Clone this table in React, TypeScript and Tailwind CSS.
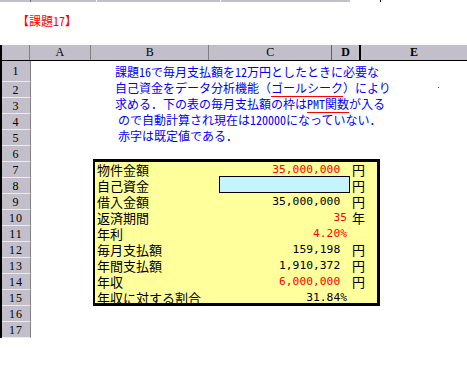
import React from "react";

// shared grey of the row/column headers
const HEAD_BG = "bg-[#c2bfca]";

interface Item {
  label: string;
  value?: string;
  unit?: string;
  red?: boolean;
  input?: boolean;
}

const items: Item[] = [
  { label: "物件金額", value: "35,000,000 ", unit: "円", red: true },
  { label: "自己資金", input: true, unit: "円" },
  { label: "借入金額", value: "35,000,000 ", unit: "円" },
  { label: "返済期間", value: "35", unit: "年", red: true },
  { label: "年利", value: "4.20%", red: true },
  { label: "毎月支払額", value: "159,198 ", unit: "円" },
  { label: "年間支払額", value: "1,910,372 ", unit: "円" },
  { label: "年収", value: "6,000,000 ", unit: "円", red: true },
  { label: "年収に対する割合", value: "31.84%" },
];

// ascii runs drawn at half width, like the sheet's gothic font
function H({ children }: { children: React.ReactNode }) {
  return <span className="[font-feature-settings:'hwid']">{children}</span>;
}

export default function App() {
  const rows = Array.from({ length: 17 }, (_, i) => i + 1);

  return (
    <div className="relative w-[467px] h-[376px] overflow-hidden bg-white font-['Noto_Sans_CJK_JP',sans-serif]">
      {/* leftover strip of the sheet above */}
      <div className="flex h-[2px]">
        <div className={`w-[31px] ${HEAD_BG} border-r border-[#707070]`} />
        <div className={`w-[65px] ${HEAD_BG}`} />
        <div className={`w-[124px] ${HEAD_BG} border-l border-white`} />
        <div className={`w-[130px] ${HEAD_BG} border-l border-white`} />
        <div className="w-[30px]" />
        <div className="w-px bg-black" />
      </div>

      {/* title */}
      <div className="h-[43px] pl-[17px] pt-[12px] text-[12px] leading-[14px] text-[#ff0000]">
        【課題<H>17</H>】
      </div>

      {/* column headers */}
      <div className="flex h-[16px] border-b border-black font-['Liberation_Serif',serif] text-[12px] leading-[15px] text-black">
        <div className={`w-[31px] ${HEAD_BG} border-l-2 border-black border-r border-r-[#808080]`} />
        <div className={`w-[65px] ${HEAD_BG} border-r border-[#808080] text-center`}>A</div>
        <div className={`w-[124px] ${HEAD_BG} border-r border-[#808080] text-center`}>B</div>
        <div className={`w-[130px] ${HEAD_BG} border-r border-[#606060] text-center`}>C</div>
        <div className={`w-[30px] ${HEAD_BG} border-r-2 border-black text-center font-bold`}>D</div>
        <div className={`w-[106px] shrink-0 ${HEAD_BG} text-center font-bold`}>E</div>
      </div>

      <div className="flex">
        {/* row headers */}
        <div className="w-[31px] shrink-0 border-l-2 border-black">
          {rows.map((n) => (
            <div
              key={n}
              className={`${n === 1 ? "h-[21px]" : "h-[16px]"} ${HEAD_BG} border-b border-[#ecebf4] border-r border-r-[#808080] flex items-center justify-center font-['Liberation_Serif',serif] text-[12px] tracking-[1px] text-black`}
            >
              {n}
            </div>
          ))}
        </div>

        {/* cells */}
        <div className="relative flex-1">
          <div className="pt-[3px] pl-[84px] text-[12px] leading-[16px] text-[#0000ff] whitespace-nowrap">
            <div>
              課題<H>16</H>で毎月支払額を<H>12</H>万円としたときに必要な
            </div>
            <div>
              自己資金をデータ分析機能（
              <span className="underline decoration-[#ff0000] underline-offset-[3px]">ゴールシーク</span>
              ）により
            </div>
            <div>
              求める．下の表の毎月支払額の枠は
              <span className="underline decoration-[#ff0000] underline-offset-[3px]">
                <H>PMT</H>関数
              </span>
              が入る
            </div>
            <div className="pl-[3px]">
              ので自動計算され現在は<H>120000</H>になっていない．
            </div>
            <div className="pl-[3px]">赤字は既定値である．</div>
          </div>

          <span className="absolute left-[407px] top-[26px] h-px w-px bg-[#ff0000]" />

          {/* loan table */}
          <div className="ml-[62px] mt-[15px] w-[287px] border-l-2 border-t-[3px] border-r-[3px] border-b-[3px] border-black bg-[#ffff9c]">
            {items.map((it, i) => (
              <div
                key={it.label}
                className={`flex ${i === items.length - 1 ? "h-[13px]" : "h-[16px]"} text-[13px] leading-[16px] text-black`}
              >
                <div className="w-[125px] pl-[2px] whitespace-nowrap">{it.label}</div>
                <div className="w-[130px]">
                  {it.input ? (
                    <div className="-ml-px -mt-[2px] h-[17px] w-[131px] border border-black bg-[#c6f4fc]" />
                  ) : (
                    <div
                      className={`pr-[3px] text-right whitespace-pre font-['DejaVu_Sans_Mono',monospace] text-[11.3px] leading-[16px] ${
                        it.red ? "text-[#ff0000]" : "text-black"
                      }`}
                    >
                      {it.value}
                    </div>
                  )}
                </div>
                <div className="w-[27px] pl-[2px]">{it.unit}</div>
              </div>
            ))}
          </div>
        </div>
      </div>
    </div>
  );
}
